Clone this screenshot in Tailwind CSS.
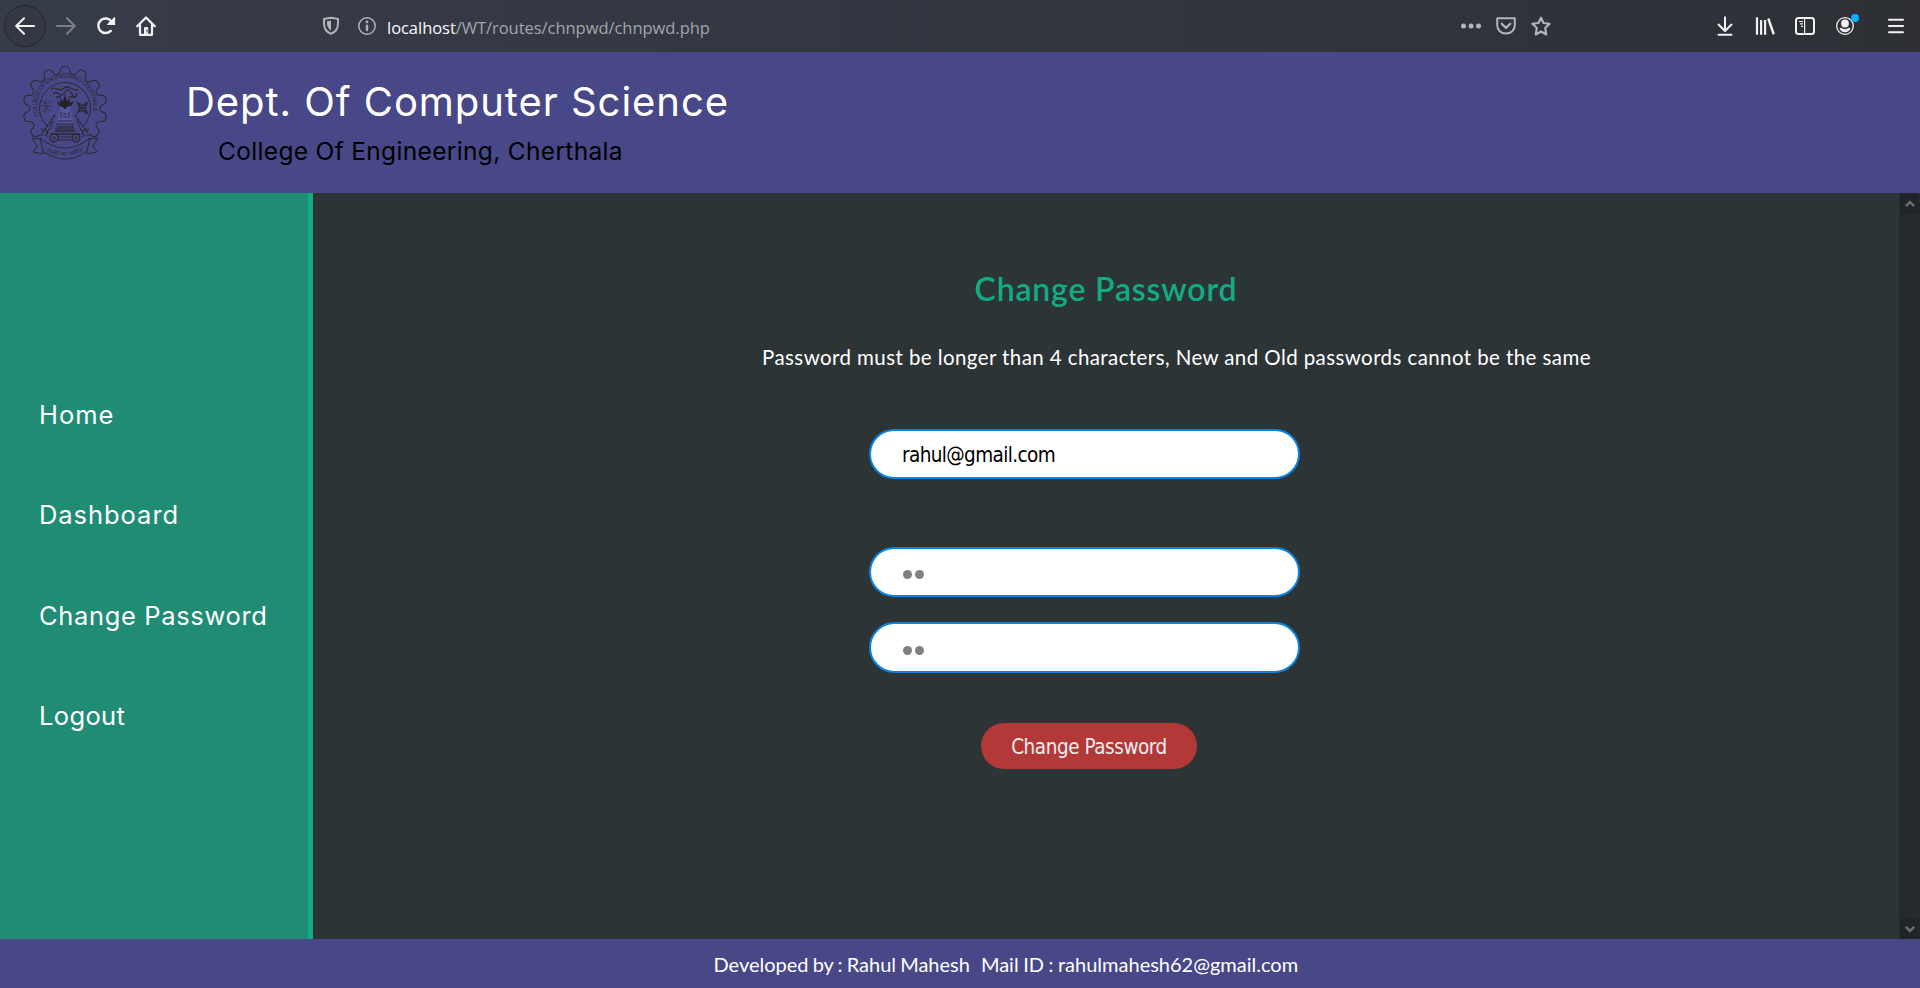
<!DOCTYPE html>
<html lang="en">
<head>
<meta charset="utf-8">
<title>Change Password</title>
<script src="https://cdn.jsdelivr.net/npm/@tailwindcss/browser@4"></script>
</head>
<body class="flex h-[988px] w-[1920px] flex-col overflow-hidden bg-[#2d3436] whitespace-nowrap text-white">

<!-- Browser toolbar -->
<div class="flex h-[52px] shrink-0 items-center bg-linear-to-r from-[#373c49] to-[#2e3036] pl-1 text-[#f1f1f2]">
  <div class="flex size-[42px] items-center justify-center rounded-full border border-[#24272e] bg-[#343843]">
    <svg class="size-5" viewBox="0 0 20 20" fill="none" stroke="currentColor" stroke-width="2" stroke-linecap="round" stroke-linejoin="round"><path d="M19 10H1.5M9 2.2L1.2 10L9 17.8"/></svg>
  </div>
  <svg class="ml-2.5 size-5 text-[#7c7f86]" viewBox="0 0 20 20" fill="none" stroke="currentColor" stroke-width="2" stroke-linecap="round" stroke-linejoin="round"><path d="M1 10H18.5M11 2.2L18.8 10L11 17.8"/></svg>
  <svg class="ml-5 size-5" viewBox="0 0 20 20"><path fill="none" stroke="currentColor" stroke-width="2.4" stroke-linecap="round" d="M14.8 14.9A7.3 7.3 0 1 1 15.6 5.6"/><path fill="currentColor" d="M18.2 1.2q.9-.6 .9 .5V9H11.600q-1-.1-.3-.9Z"/></svg>
  <svg class="ml-5 size-5" viewBox="0 0 20 20"><path fill="none" stroke="currentColor" stroke-width="2.2" stroke-linecap="round" stroke-linejoin="round" d="M1.2 10.300L10 1.500L18.800 10.300M4 9V18.800H16V9"/><path fill="currentColor" d="M8 19V12.300Q8 11 9.200 11H11Q12.200 11 12.200 12.300V19Z"/><path fill="#363b47" d="M10.500 13.500h1v3h-1z"/></svg>

  <div class="ml-[165px] flex items-center text-[#b1b3b7]">
    <svg class="size-5" viewBox="0 0 20 20"><path fill="none" stroke="currentColor" stroke-width="2" stroke-linejoin="round" d="M10 1.800C12.500 2 14.800 2.400 17 2.900V7C17 12.500 14 16.500 10 17.700C6 16.500 3 12.500 3 7V2.900C5.200 2.400 7.500 2 10 1.800Z"/><path fill="currentColor" d="M10 4.500V14.500C7.500 13.200 6 10.300 6 7.200V5.200Z"/></svg>
    <svg class="ml-4 size-5" viewBox="0 0 20 20"><circle cx="10" cy="10" r="8.200" fill="none" stroke="currentColor" stroke-width="1.500"/><circle cx="10" cy="5.900" r="1.400" fill="currentColor"/><path fill="none" stroke="currentColor" stroke-width="2.400" stroke-linecap="round" d="M10 9.700V14"/></svg>
    <div class="ml-2.5 pt-1 font-['Open_Sans',sans-serif] text-[16.5px] leading-5 tracking-[-0.04px]"><span class="text-[#f9f9fa]">localhost</span><span class="text-[#a3a5aa]">/WT/routes/chnpwd/chnpwd.php</span></div>
  </div>

  <div class="ml-auto flex items-center gap-[15px] text-[#b3b5b8]">
    <svg class="size-5" viewBox="0 0 20 20" fill="currentColor"><circle cx="2.500" cy="10" r="2.500"/><circle cx="10" cy="10" r="2.500"/><circle cx="17.500" cy="10" r="2.500"/></svg>
    <svg class="size-5" viewBox="0 0 20 20" fill="none" stroke="currentColor" stroke-width="2" stroke-linecap="round" stroke-linejoin="round"><path d="M1.200 2.200H18.800V9C18.800 14.200 15 17.500 10 17.500S1.200 14.200 1.200 9Z"/><path stroke-width="2.200" d="M5.700 7.700L10 11.900L14.300 7.700"/></svg>
    <svg class="size-5" viewBox="0 0 20 20" fill="none" stroke="currentColor" stroke-width="2.100" stroke-linejoin="round"><path d="M10 1.700L12.500 7L18.600 7.800L14.200 12L15.300 18.500L10 15.500L4.700 18.500L5.800 12L1.400 7.800L7.500 7Z"/></svg>
  </div>
  <div class="mr-[14px] ml-[164px] flex items-center gap-5">
    <svg class="size-5" viewBox="0 0 20 20" fill="none" stroke="currentColor" stroke-width="2" stroke-linecap="round" stroke-linejoin="round"><path d="M10 1.200V14.500M3.500 8.500L10 15L16.500 8.500M3.500 18.800H16.500"/></svg>
    <svg class="size-5" viewBox="0 0 20 20" fill="none" stroke="currentColor" stroke-width="2.200"><path d="M2 1.300V18.700M6.100 4V18.700M10.100 4V18.700"/><path stroke-width="2.400" d="M13.300 2.500L18.800 18.300"/></svg>
    <svg class="size-5" viewBox="0 0 20 20" fill="none" stroke="currentColor" stroke-width="2"><rect x="1" y="2" width="18" height="16" rx="2.500"/><path stroke-width="1.200" d="M9.600 2.500V17.500M4 5.500H8M5 7.800H8M6 10.300H8"/></svg>
    <div class="relative size-5">
      <svg class="size-5" viewBox="0 0 20 20"><circle cx="10" cy="10" r="8.300" fill="none" stroke="currentColor" stroke-width="1.300"/><circle cx="10" cy="7.500" r="3.900" fill="currentColor"/><path fill="currentColor" d="M4.500 12.300Q6.200 11.200 7.500 12.500Q10 14 12.500 12.500Q13.800 11.200 15.500 12.300Q14 16.300 10 16.300T4.500 12.300Z"/></svg>
      <span class="absolute -top-[2px] left-4 size-2 rounded-full bg-[#00b3f4]"></span>
    </div>
    <svg class="ml-[11px] size-5" viewBox="0 0 20 20" fill="none" stroke="currentColor" stroke-width="2" stroke-linecap="round"><path d="M3 3.700H17M3 10H17M3 16.300H17"/></svg>
  </div>
</div>

<!-- Page header -->
<header class="flex h-[141px] shrink-0 bg-[#484787] font-['Inter',sans-serif]">
  <svg class="mt-[13px] ml-[22px] h-[96px] w-[86px] shrink-0" viewBox="22 65 86 96" fill="none" stroke="#2c2831" stroke-width="1">
    <defs>
      <path id="tooth" d="M-7.800-34.200Q-5.200-34.200-4.700-38Q-4.400-42 0-42T4.700-38Q5.200-34.200 7.800-34.200"/>
      <path id="ring" d="M39 116A28 28 0 1 1 91 116"/>
      <path id="motto" d="M46 151Q65 161 84 151"/>
    </defs>
    <g transform="translate(65 108.500)">
      <use href="#tooth"/>
      <use href="#tooth" transform="rotate(25.700)"/><use href="#tooth" transform="rotate(-25.700)"/>
      <use href="#tooth" transform="rotate(51.400)"/><use href="#tooth" transform="rotate(-51.400)"/>
      <use href="#tooth" transform="rotate(77.100)"/><use href="#tooth" transform="rotate(-77.100)"/>
      <use href="#tooth" transform="rotate(102.800)"/><use href="#tooth" transform="rotate(-102.800)"/>
      <use href="#tooth" transform="rotate(128.500)"/><use href="#tooth" transform="rotate(-128.500)"/>
    </g>
    <path d="M48 127A25.500 25.500 0 1 1 82 127"/>
    <text font-family="Liberation Sans, sans-serif" font-size="6.200" fill="#2c2831" stroke="none"><textPath href="#ring" textLength="104">COLLEGE OF ENGINEERING CHERTHALA</textPath></text>
    <path fill="#5356a0" stroke="none" d="M60 106H70L73 124H57Z"/>
    <path stroke-width="1.300" d="M51 90Q53 87 57 89T64 88Q67 86 70 88T78 90M53 94Q56 91 59 94T65 92T72 94T77 93M56 97H61M69 97H74"/>
    <path fill="#241f28" stroke="none" d="M57 101L60 103L61 98L63 102L65 94L67 102L69 98L70 103L74 101L71 106L67 107L66 109H64L63 107L59 106Z"/>
    <path stroke-dasharray="1.500 1" d="M42 101L46 104L51 101M41 106H52M43 112L47 108L51 112M46 100V113"/>
    <path stroke-width="1.500" d="M78 103L82 106L87 103L85 108L87 113L82 110L78 112L80 108ZM79 108H86"/>
    <path d="M61 112V118M69 112V118M63 114H67M63 117H67M58 121H72M56 124H74M55 129H75"/>
    <path stroke-width="2.500" stroke-dasharray="1.300 .8" d="M57 127H74"/>
    <path stroke-width="1.600" d="M50 134H80M55 131H75"/>
    <circle cx="54" cy="138" r="3.800" stroke-width="1.300"/><circle cx="54" cy="138" r="1.200"/>
    <circle cx="76" cy="138" r="3.800" stroke-width="1.300"/><circle cx="76" cy="138" r="1.200"/>
    <path d="M58 137H72M58 140H72"/>
    <path stroke-width="1.300" stroke-dasharray="3 .8" d="M55 115L50 122L46 128L42 133M53 121L50 128L45 136M75 115L80 122L84 128L88 133M77 121L80 128L85 136M41 129L47 131L48 137M89 129L83 131L82 137"/>
    <path d="M40 138Q52 148 65 148T90 138L87 151Q77 159 65 159T43 151ZM40 139L32 138L37 146L33 152L43 154V151M90 139L98 138L93 146L97 152L87 154V151"/>
    <text font-family="Liberation Sans, sans-serif" font-size="6" fill="#2c2831" stroke="none"><textPath href="#motto" textLength="38">तमसो मा ज्योति</textPath></text>
  </svg>
  <div class="ml-[78px] pt-[26px]">
    <h1 class="text-[40px] leading-[48px] font-normal tracking-[0.95px]">Dept. Of Computer Science</h1>
    <p class="pt-px pl-8 text-[24.5px] leading-[48px] tracking-[0.33px] text-black">College Of Engineering, Cherthala</p>
  </div>
</header>

<div class="flex min-h-0 flex-1">
  <nav class="flex w-[313px] shrink-0 flex-col border-r-[5px] border-[#10ac84] bg-[#218c74] pt-[172px] pl-[39px] font-['Inter',sans-serif] text-[25.5px] leading-[100.3px]">
    <a class="tracking-[0.95px]">Home</a>
    <a class="tracking-[0.95px]">Dashboard</a>
    <a class="tracking-[0.65px]">Change Password</a>
    <a class="tracking-[0.35px]">Logout</a>
  </nav>

  <main class="flex flex-1 flex-col items-center pt-[76px]">
    <h2 class="font-['Lato',sans-serif] text-[32px] leading-10 font-semibold tracking-[0.82px] text-[#10ac84]">Change Password</h2>
    <p class="mt-[33px] ml-[141px] font-['Lato',sans-serif] text-[20.5px] leading-[30px] tracking-[0.41px]">Password must be longer than 4 characters, New and Old passwords cannot be the same</p>
    <form class="mt-[57px] flex flex-col items-center font-['DejaVu_Sans_Condensed','DejaVu_Sans',sans-serif] text-[20.5px] leading-none">
      <input type="email" value="rahul@gmail.com" class="mr-[43px] h-[50px] w-[431px] rounded-full border-2 border-[#0984e3] bg-white px-[31px] pt-0.5 tracking-[-0.62px] text-black">
      <div class="mt-[68px] mr-[43px] flex h-[50px] w-[431px] items-center gap-[3px] rounded-full border-2 border-[#0984e3] bg-white pt-[5px] pl-[32px]"><i class="size-[9px] rounded-full bg-[#808080]"></i><i class="size-[9px] rounded-full bg-[#808080]"></i></div>
      <div class="mt-[25px] mr-[43px] flex h-[51px] w-[431px] items-center gap-[3px] rounded-full border-2 border-[#0984e3] bg-white pt-[5px] pl-[32px]"><i class="size-[9px] rounded-full bg-[#808080]"></i><i class="size-[9px] rounded-full bg-[#808080]"></i></div>
      <button type="button" class="mt-[50px] mr-[34px] h-[46px] w-[216px] rounded-full bg-[#b33939] pt-0.5 tracking-[-0.45px] text-[#ececec]">Change Password</button>
    </form>
  </main>

  <!-- Scrollbar -->
  <div class="flex w-[21px] shrink-0 flex-col items-center justify-between bg-[#262a2c]">
    <div class="flex h-[21px] w-[19px] items-center justify-center bg-[#212428]"><svg class="h-2 w-2.5" viewBox="0 0 10 8" fill="none" stroke="#6b6e71" stroke-width="2.600"><path d="M.800 6.200L5 2L9.200 6.200"/></svg></div>
    <div class="flex h-[21px] w-[19px] items-center justify-center bg-[#212428]"><svg class="h-2 w-2.5" viewBox="0 0 10 8" fill="none" stroke="#6b6e71" stroke-width="2.600"><path d="M.800 1.800L5 6L9.200 1.800"/></svg></div>
  </div>
</div>

<footer class="flex h-[49px] shrink-0 gap-[11px] bg-[#484787] pt-[11px] pl-[713.5px] font-['Lato',sans-serif] text-[20px] leading-[28px]">
  <span class="[word-spacing:-1px]">Developed by : Rahul Mahesh</span>
  <span class="[word-spacing:-0.6px]">Mail ID : rahulmahesh62@gmail.com</span>
</footer>
</body>
</html>
